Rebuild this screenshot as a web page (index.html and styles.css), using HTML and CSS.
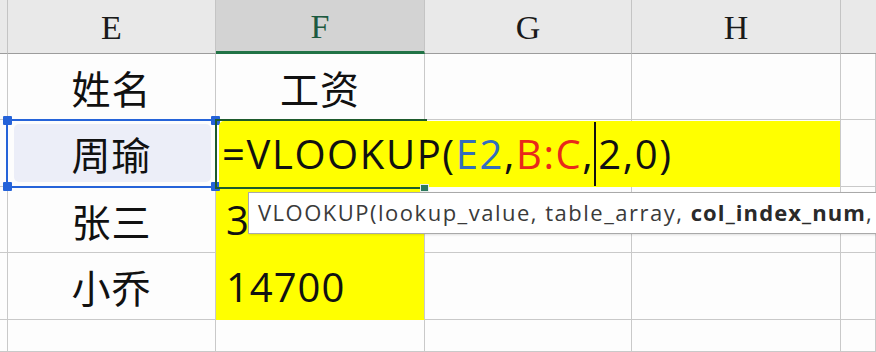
FILE: index.html
```html
<!DOCTYPE html>
<html lang="zh-CN">
<head>
<meta charset="utf-8">
<title>VLOOKUP</title>
<link rel="stylesheet" href="styles.css">
</head>
<body>
<div class="sheet">
  <div class="grid">
    <div class="cell hd"></div>
    <div class="cell hd">E</div>
    <div class="cell hd hd-active">F</div>
    <div class="cell hd">G</div>
    <div class="cell hd">H</div>
    <div class="cell hd hd-end"></div>

    <div class="cell stub"></div>
    <div class="cell cn">姓名</div>
    <div class="cell cn">工资</div>
    <div class="cell"></div>
    <div class="cell"></div>
    <div class="cell"></div>

    <div class="cell stub"></div>
    <div class="cell selcell"><div class="sel-fill">周瑜</div></div>
    <div class="cell"></div>
    <div class="cell"></div>
    <div class="cell"></div>
    <div class="cell"></div>

    <div class="cell stub"></div>
    <div class="cell cn">张三</div>
    <div class="cell num yellow">3</div>
    <div class="cell"></div>
    <div class="cell"></div>
    <div class="cell"></div>

    <div class="cell stub"></div>
    <div class="cell cn">小乔</div>
    <div class="cell num yellow">14700</div>
    <div class="cell"></div>
    <div class="cell"></div>
    <div class="cell"></div>

    <div class="cell stub"></div>
    <div class="cell"></div>
    <div class="cell"></div>
    <div class="cell"></div>
    <div class="cell"></div>
    <div class="cell"></div>
  </div>

  <div class="sel">
    <span class="h h-tl"></span><span class="h h-tr"></span>
    <span class="h h-bl"></span><span class="h h-br"></span>
  </div>

  <div class="active"></div>
  <div class="editor">=VLOOKUP(<span class="ref-e">E2</span>,<span class="ref-b">B:C</span>,<span class="caret"></span>2,0)</div>
  <div class="fill-handle"></div>

  <div class="tip">VLOOKUP(lookup_value, table_array, <b>col_index_num</b>,</div>
</div>
</body>
</html>
```

FILE: styles.css
```css
* { box-sizing: border-box; }
html, body { margin: 0; padding: 0; }
body {
  width: 876px;
  height: 352px;
  overflow: hidden;
  background: #fdfdfd;
  font-family: "Open Sans", "Noto Sans CJK SC", sans-serif;
}
.sheet {
  position: relative;
  width: 876px;
  height: 352px;
  overflow: hidden;
}
.grid {
  display: grid;
  grid-template-columns: 8px 208px 209px 207px 209px 35px;
  grid-template-rows: 54px 66px 67px 66px 67px 32px;
}
.cell {
  border-right: 1px solid #c9c9c9;
  border-bottom: 1px solid #c9c9c9;
  background: #fdfdfd;
}
.hd {
  background: #e9e9e9;
  border-bottom: 1px solid #9c9c9c;
  border-right: 1px solid #c4c4c4;
  font-family: "Liberation Serif", "DejaVu Serif", serif;
  font-size: 34px;
  color: #1a1a1a;
  display: flex;
  align-items: center;
  justify-content: center;
  padding-top: 2px;
}
.hd-active {
  background: #d3d3d3;
  color: #1d5a40;
  border-bottom: 3px solid #217346;
}
.hd-end { border-right: none; }
.stub { background: #fdfdfd; }
.cn, .sel-fill {
  font-family: "Noto Sans CJK SC", sans-serif;
  font-size: 39px;
  color: #111;
  display: flex;
  align-items: center;
  justify-content: center;
  letter-spacing: 1px;
}
.selcell {
  padding: 4px 4px 4px 6px;
}
.sel-fill {
  height: 100%;
  background: #eceef8;
  border-radius: 5px;
  padding-right: 2px;
}
.num {
  font-size: 40px;
  color: #111;
  display: flex;
  align-items: center;
  padding-left: 10px;
  letter-spacing: 1px;
}
.yellow { background: #ffff00; border-bottom-color: #ffff00; }

/* selection frame on E2 */
.sel {
  position: absolute;
  left: 6px;
  top: 119px;
  width: 211px;
  height: 69px;
  border: 2px solid #2563d9;
  pointer-events: none;
}
.h {
  position: absolute;
  width: 9px;
  height: 9px;
  background: #2563d9;
  border-radius: 1px;
}
.h-tl { left: -5px; top: -5px; }
.h-tr { right: -5px; top: -5px; }
.h-bl { left: -5px; bottom: -5px; }
.h-br { right: -5px; bottom: -5px; }

/* active cell F2 */
.active {
  position: absolute;
  left: 215px;
  top: 119px;
  width: 212px;
  height: 70px;
  border: 2px solid #1d5a2c;
}
.editor {
  position: absolute;
  left: 219px;
  top: 121px;
  width: 621px;
  height: 66px;
  background: #ffff00;
  border-top-left-radius: 5px;
  font-size: 40px;
  line-height: 66px;
  color: #111;
  padding-left: 3px;
  letter-spacing: 1.6px;
  white-space: nowrap;
}
.ref-e { color: #336dbd; }
.ref-b { color: #e8291b; }
.caret {
  display: inline-block;
  width: 0;
  height: 64px;
  border-left: 2px solid #111;
  vertical-align: top;
  margin: 1px 2px 0 0;
}
.fill-handle {
  position: absolute;
  left: 420px;
  top: 184px;
  width: 9px;
  height: 8px;
  background: #2b7a5e;
  border: 1px solid #e8f0ec;
}

/* tooltip */
.tip {
  position: absolute;
  left: 248px;
  top: 192px;
  width: 640px;
  height: 42px;
  background: #ffffff;
  border: 1px solid #a9a9a9;
  border-right: none;
  box-shadow: 1px 1px 2px rgba(0,0,0,0.12);
  padding-left: 9px;
  font-size: 22px;
  line-height: 38px;
  color: #3a3a3a;
  letter-spacing: 1.5px;
  white-space: nowrap;
}
.tip b { font-weight: 700; color: #2a2a2a; letter-spacing: 1.1px; }
```
